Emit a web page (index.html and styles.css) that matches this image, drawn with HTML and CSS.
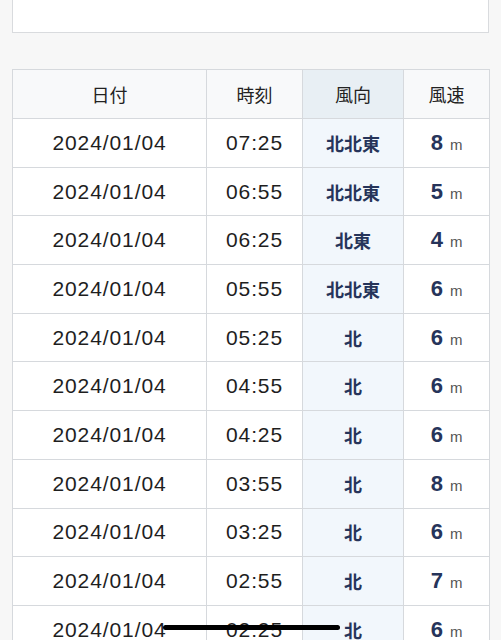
FILE: index.html
```html
<!DOCTYPE html>
<html lang="ja">
<head>
<meta charset="utf-8">
<title>風向風速</title>
<link rel="stylesheet" href="styles.css">
</head>
<body>
<div class="page">
  <div class="card"></div>
  <table class="wind">
    <colgroup>
      <col class="c-date"><col class="c-time"><col class="c-dir"><col class="c-speed">
    </colgroup>
    <thead>
      <tr><th>日付</th><th>時刻</th><th class="dir">風向</th><th>風速</th></tr>
    </thead>
    <tbody>
      <tr><td class="num">2024/01/04</td><td class="num">07:25</td><td class="dir">北北東</td><td class="spd"><b>8</b><span>m</span></td></tr>
      <tr><td class="num">2024/01/04</td><td class="num">06:55</td><td class="dir">北北東</td><td class="spd"><b>5</b><span>m</span></td></tr>
      <tr><td class="num">2024/01/04</td><td class="num">06:25</td><td class="dir">北東</td><td class="spd"><b>4</b><span>m</span></td></tr>
      <tr><td class="num">2024/01/04</td><td class="num">05:55</td><td class="dir">北北東</td><td class="spd"><b>6</b><span>m</span></td></tr>
      <tr><td class="num">2024/01/04</td><td class="num">05:25</td><td class="dir">北</td><td class="spd"><b>6</b><span>m</span></td></tr>
      <tr><td class="num">2024/01/04</td><td class="num">04:55</td><td class="dir">北</td><td class="spd"><b>6</b><span>m</span></td></tr>
      <tr><td class="num">2024/01/04</td><td class="num">04:25</td><td class="dir">北</td><td class="spd"><b>6</b><span>m</span></td></tr>
      <tr><td class="num">2024/01/04</td><td class="num">03:55</td><td class="dir">北</td><td class="spd"><b>8</b><span>m</span></td></tr>
      <tr><td class="num">2024/01/04</td><td class="num">03:25</td><td class="dir">北</td><td class="spd"><b>6</b><span>m</span></td></tr>
      <tr><td class="num">2024/01/04</td><td class="num">02:55</td><td class="dir">北</td><td class="spd"><b>7</b><span>m</span></td></tr>
      <tr><td class="num">2024/01/04</td><td class="num">02:25</td><td class="dir">北</td><td class="spd"><b>6</b><span>m</span></td></tr>
    </tbody>
  </table>
</div>
<div class="home-indicator"></div>
</body>
</html>
```
FILE: styles.css
```css
html, body {
  margin: 0;
  padding: 0;
  background: #f7f7f7;
  font-family: "Liberation Sans", "Noto Sans CJK JP", sans-serif;
  color: #222;
  overflow: hidden;
  height: 640px;
}
.page {
  padding: 0 12px;
}
.card {
  height: 32px;
  background: #fff;
  border: 1px solid #d9dbde;
  border-top: none;
}
.wind {
  margin-top: 36px;
  width: 477px;
  border-collapse: collapse;
  table-layout: fixed;
  background: #fff;
}
.c-date { width: 194px; }
.c-time { width: 96px; }
.c-dir { width: 101px; }
.c-speed { width: 86px; }
.wind th, .wind td {
  border: 1px solid #d6d9dd;
  text-align: center;
  vertical-align: middle;
  padding: 0;
}
.wind th {
  height: 48px;
  background: #f8f9fa;
  font-family: "Noto Sans CJK JP", sans-serif;
  font-weight: 400;
  font-size: 18px;
  color: #222;
}
.wind th.dir {
  background: #e8eff4;
}
.wind td {
  height: 47.7px;
}
.wind td.num {
  font-size: 21px;
  letter-spacing: 0.9px;
  color: #1e1e1e;
}
.wind td.dir {
  background: #f2f7fc;
  font-family: "Noto Sans CJK JP", sans-serif;
  font-weight: 700;
  font-size: 18px;
  color: #26345a;
}
.wind td.spd b {
  font-size: 22px;
  font-weight: 700;
  color: #26345a;
}
.wind td.spd span {
  font-size: 15px;
  color: #555;
  margin-left: 7px;
}
.home-indicator {
  position: fixed;
  left: 163px;
  top: 625px;
  width: 177px;
  height: 5px;
  border-radius: 3px;
  background: #000;
}
```
